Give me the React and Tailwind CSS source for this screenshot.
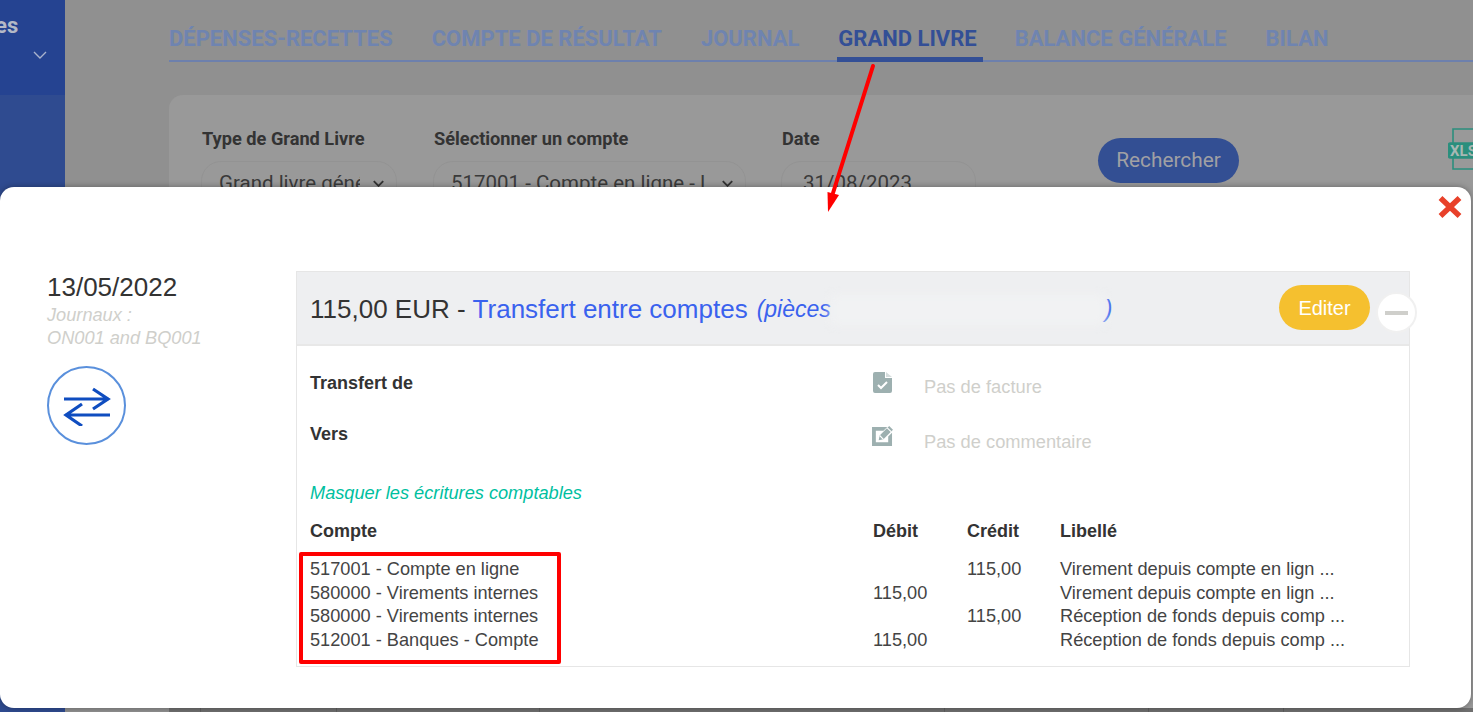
const tabs = [
  { label: "DÉPENSES-RECETTES" },
  { label: "COMPTE DE RÉSULTAT" },
  { label: "JOURNAL" },
  { label: "GRAND LIVRE", active: true },
  { label: "BALANCE GÉNÉRALE" },
  { label: "BILAN" },
];

const rows = [
  { compte: "517001 - Compte en ligne", debit: "", credit: "115,00", libelle: "Virement depuis compte en lign ..." },
  { compte: "580000 - Virements internes", debit: "115,00", credit: "", libelle: "Virement depuis compte en lign ..." },
  { compte: "580000 - Virements internes", debit: "", credit: "115,00", libelle: "Réception de fonds depuis comp ..." },
  { compte: "512001 - Banques - Compte", debit: "115,00", credit: "", libelle: "Réception de fonds depuis comp ..." },
];

const Chevron = ({ className, strokeWidth = 1.4 }) => (
  <svg viewBox="0 0 14 8" className={className} fill="none" stroke="currentColor" strokeWidth={strokeWidth}>
    <path d="M1 1l6 6 6-6" />
  </svg>
);

const Sidebar = () => (
  <div className="w-[65px] shrink-0 flex flex-col bg-[#2f4b90] font-['Roboto',sans-serif]">
    <div className="h-[95px] bg-[#254391] overflow-hidden flex flex-col items-end">
      <span className="mt-[12px] self-start -ml-[5px] text-[22px] font-bold text-[#b4b9c6] leading-[28px]">es</span>
      <Chevron className="mt-[11px] mr-[18px] w-[14px] h-[8px] text-[#a9b3cd]" />
    </div>
  </div>
);

const FakeSelect = ({ width, textWidth, text }) => (
  <div className={`${width} h-[60px] rounded-[20px] border border-[#939393] flex items-start pl-[17px] pr-[12px] pt-[9px] justify-between`}>
    <span className={`${textWidth} text-[20.5px] leading-[24px] text-[#3a3a3a] whitespace-nowrap overflow-hidden`}>{text}</span>
    <Chevron className="mt-[9px] w-[11px] h-[7px] shrink-0 text-[#333]" strokeWidth={2.4} />
  </div>
);

const Background = () => (
  <div className="flex-1 min-w-0 flex flex-col pl-[104px] font-['Roboto',sans-serif]">
    <div className="h-[62px] border-b-2 border-[#6d80ad] flex items-end gap-[39px]">
      {tabs.map((tab) => (
        <div
          key={tab.label}
          className={
            tab.active
              ? "h-[62px] pt-[24px] text-[22px] leading-[30px] font-bold text-[#334f96] whitespace-nowrap border-b-[5px] border-[#334f96] -mb-[2px] pr-[6px] -ml-[1px] pl-[1px] -mr-[7px]"
              : "h-[62px] pt-[26px] text-[22px] leading-[30px] font-bold text-[#6f84b0] whitespace-nowrap"
          }
        >
          {tab.label}
        </div>
      ))}
    </div>
    <div className="mt-[33px] flex-1 rounded-tl-[14px] bg-[#999999] flex flex-col justify-between pl-[33px] overflow-hidden">
      <div className="flex pt-[34px]">
        <div className="w-[232px] shrink-0">
          <p className="text-[18.2px] font-bold leading-[20px] text-[#333]">Type de Grand Livre</p>
          <div className="mt-[12px] -ml-[1px]">
            <FakeSelect width="w-[196px]" textWidth="w-[141px]" text="Grand livre géné" />
          </div>
        </div>
        <div className="w-[348px] shrink-0">
          <p className="text-[18.2px] font-bold leading-[20px] text-[#333]">Sélectionner un compte</p>
          <div className="mt-[12px] -ml-[1px]">
            <FakeSelect width="w-[313px]" textWidth="w-[260px]" text="517001 - Compte en ligne - L" />
          </div>
        </div>
        <div className="w-[316px] shrink-0">
          <p className="text-[18.2px] font-bold leading-[20px] text-[#333]">Date</p>
          <div className="mt-[12px] -ml-[1px] w-[195px] h-[60px] rounded-[20px] border border-[#939393] pl-[21px] pt-[9px] text-[20.5px] leading-[24px] text-[#3a3a3a]">
            31/08/2023
          </div>
        </div>
        <div className="w-[141px] shrink-0 h-[45px] mt-[9px] rounded-full bg-[#334f93] text-[#a0a0a4] text-[20.8px] flex items-center justify-center">
          Rechercher
        </div>
        <svg viewBox="0 0 38 42" className="ml-[209px] -mt-[1px] w-[38px] h-[42px] shrink-0 text-[#2b8f7d]" fill="none" stroke="currentColor" strokeWidth="1.6">
          <path d="M5 15V1h33M5 30v11h33" />
          <rect x="0.5" y="15" width="38" height="15" rx="2" fill="currentColor" />
          <text x="2" y="28" fontSize="15" fontWeight="700" fill="#a8b8b4" stroke="none" fontFamily="Roboto">XLS</text>
        </svg>
      </div>
      <div className="h-[4px] bg-[#6f6f6f] -ml-[33px] flex">
        <div className="w-[32px] border-r border-[#5f5f5f]" />
        <div className="w-[136px] border-r border-[#5f5f5f]" />
        <div className="w-[203px] border-r border-[#5f5f5f]" />
        <div className="w-[405px] border-r border-[#5f5f5f]" />
        <div className="w-[204px] border-r border-[#5f5f5f]" />
        <div className="w-[135px] border-r border-[#5f5f5f]" />
      </div>
    </div>
  </div>
);

const TransferIcon = () => (
  <div className="mt-[16px] w-[79px] h-[79px] rounded-full border-[2px] border-[#5a90dc] flex items-center justify-center">
    <svg viewBox="0 0 48 40" className="w-[48px] h-[40px] text-[#0f4dc0]" fill="none" stroke="currentColor" strokeWidth="3.2">
      <path d="M1 13h45M30 3l15 10-15 10" />
      <path d="M47 29H2M19 18L3 29l16 11" />
    </svg>
  </div>
);

const FileCheckIcon = () => (
  <svg viewBox="0 0 19 21" className="w-[19px] h-[21px] text-[#9db0b0]">
    <path fill="currentColor" d="M2 0h10v6h7v13a2 2 0 0 1-2 2H2a2 2 0 0 1-2-2V2a2 2 0 0 1 2-2z" />
    <path fill="#d5dddd" d="M13 0l6 5h-6z" />
    <path fill="none" stroke="#fff" strokeWidth="2" d="M5 13l3 3 6-6" />
  </svg>
);

const PenSquareIcon = () => (
  <svg viewBox="0 0 22 21" className="-ml-[1px] w-[21px] h-[20px] text-[#9db0b0]">
    <path fill="currentColor" d="M0 1h16l-4 4H4v12h13v-6l4-4v14H0z" />
    <path fill="currentColor" d="M7 15l1-5L18 0l4 4-10 10z" />
    <path fill="none" stroke="#fff" strokeWidth="1.2" d="M8 10l4 4M16 2l4 4" />
  </svg>
);

const Panel = () => (
  <div className="relative w-[1114px] h-[396px] border border-[#e6e6e6] font-['Liberation_Sans',sans-serif]">
    <div className="h-[74px] bg-[#eeeff1] border-b-2 border-[#e8e8e8] flex items-center pl-[13px] pr-[39px]">
      <span className="mt-[3px] text-[26px] text-[#333] whitespace-nowrap">115,00 EUR - </span>
      <span className="mt-[3px] ml-[7px] text-[26px] text-[#3a62ee] whitespace-nowrap">Transfert entre comptes</span>
      <span className="mt-[3px] ml-[9px] text-[23px] italic text-[#3a62ee] whitespace-nowrap">(pièces</span>
      <span className="mt-[3px] w-[274px] h-[30px] bg-[#f1f2f3] blur-[5px]" />
      <span className="mt-[3px] text-[23px] italic text-[#3a62ee]">)</span>
      <span className="ml-auto -mt-[1px] w-[91px] h-[45px] rounded-full bg-[#f5c02f] text-white text-[20px] flex items-center justify-center">
        Editer
      </span>
    </div>
    <div className="absolute left-[1079px] top-[20px] w-[41px] h-[41px] rounded-full bg-white border-[2px] border-[#f0f0f0] flex items-center justify-center">
      <div className="w-[23px] h-[4px] bg-[#cfcfcb]" />
    </div>
    <div className="pl-[13px] pr-[13px]">
      <div className="flex pt-[26px] h-[137px]">
        <div className="w-[563px] pt-[1px]">
          <p className="text-[18px] font-bold leading-[20px] text-[#333]">Transfert de</p>
          <p className="mt-[31px] text-[18px] font-bold leading-[20px] text-[#333]">Vers</p>
        </div>
        <div>
          <div className="flex h-[26px]">
            <div className="w-[51px]">
              <FileCheckIcon />
            </div>
            <span className="mt-[5px] text-[18.3px] leading-[20px] text-[#cfcfcb]">Pas de facture</span>
          </div>
          <div className="flex mt-[28px] h-[26px]">
            <div className="w-[51px]">
              <PenSquareIcon />
            </div>
            <span className="mt-[6px] text-[18.3px] leading-[20px] text-[#cfcfcb]">Pas de commentaire</span>
          </div>
        </div>
      </div>
      <p className="text-[18.2px] italic leading-[20px] text-[#00bf9f]">Masquer les écritures comptables</p>
      <div className="mt-[18px] grid grid-cols-[563px_94px_93px_1fr] text-[18px] font-bold leading-[20px] text-[#333]">
        <span>Compte</span>
        <span>Débit</span>
        <span>Crédit</span>
        <span>Libellé</span>
      </div>
      <div className="mt-[17px]">
        {rows.map((row, i) => (
          <div key={i} className="grid grid-cols-[563px_94px_93px_1fr] h-[23.67px] text-[18.2px] leading-[23.67px] text-[#444] whitespace-nowrap">
            <span>{row.compte}</span>
            <span>{row.debit}</span>
            <span>{row.credit}</span>
            <span>{row.libelle}</span>
          </div>
        ))}
      </div>
    </div>
  </div>
);

const Modal = () => (
  <div className="absolute left-0 top-[187px] w-[1471px] h-[521px] rounded-[14px] bg-white shadow-[0_0_6px_rgba(0,0,0,0.35)] flex pt-[84px] pl-[47px] font-['Liberation_Sans',sans-serif]">
    <div className="w-[249px]">
      <p className="text-[26px] leading-[32px] text-[#333]">13/05/2022</p>
      <p className="mt-[1px] text-[18.2px] italic leading-[23px] text-[#cfcfcb]">
        Journaux :<br />
        ON001 and BQ001
      </p>
      <TransferIcon />
    </div>
    <Panel />
    <svg viewBox="0 0 24 22" className="absolute left-[1438px] top-[9px] w-[24px] h-[22px] text-[#e8412a]" fill="none" stroke="currentColor" strokeWidth="5.5">
      <path d="M2.5 2l19 18M21.5 2l-19 18" />
    </svg>
  </div>
);

const Annotations = () => (
  <>
    <div className="absolute left-[299px] top-[552px] w-[262px] h-[112px] border-[4px] border-[#ff0000] rounded-[2px]" />
    <svg viewBox="0 0 60 160" className="absolute left-[820px] top-[60px] w-[60px] h-[160px] text-[#ff0000]" fill="none">
      <path d="M53 6L13 133" stroke="currentColor" strokeWidth="4" strokeLinecap="round" />
      <path fill="currentColor" d="M8 152l-.5-20 11.5 3z" />
    </svg>
  </>
);

export default function App() {
  return (
    <div className="relative h-[712px] w-full overflow-hidden flex bg-[#909090]">
      <Sidebar />
      <Background />
      <Modal />
      <Annotations />
    </div>
  );
}
